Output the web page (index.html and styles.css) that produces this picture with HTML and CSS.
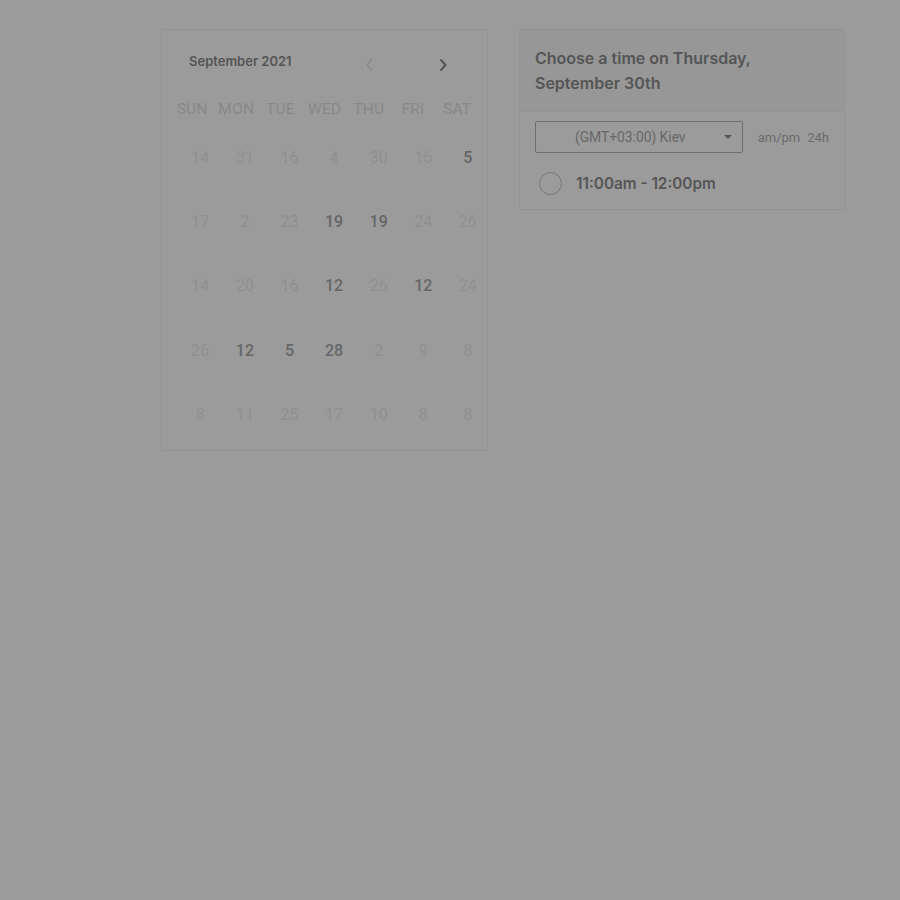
FILE: index.html
```html
<!DOCTYPE html>
<html>
<head>
<meta charset="utf-8">
<link rel="stylesheet" href="styles.css">
</head>
<body>
<div class="page">
  <div class="calendar">
    <div class="cal-head">
      <div class="month">September 2021</div>
      <div class="navs">
        <svg class="nav prev" width="12" height="16" viewBox="0 0 12 16"><path d="M8 2 L3 8 L8 14" fill="none" stroke="currentColor" stroke-width="1.6"/></svg>
        <svg class="nav next" width="12" height="16" viewBox="0 0 12 16"><path d="M3.5 2.5 L8.5 8 L3.5 13.5" fill="none" stroke="currentColor" stroke-width="2.2"/></svg>
      </div>
    </div>
    <div class="weekdays">
      <span>SUN</span><span>MON</span><span>TUE</span><span>WED</span><span>THU</span><span>FRI</span><span>SAT</span>
    </div>
    <div class="dates">
      <span>14</span><span>31</span><span>16</span><span>4</span><span>30</span><span>16</span><span class="on">5</span>
      <span>17</span><span>2</span><span>23</span><span class="on">19</span><span class="on">19</span><span>24</span><span>26</span>
      <span>14</span><span>20</span><span>16</span><span class="on">12</span><span>26</span><span class="on">12</span><span>24</span>
      <span>26</span><span class="on">12</span><span class="on">5</span><span class="on">28</span><span>2</span><span>9</span><span>8</span>
      <span>8</span><span>11</span><span>25</span><span>17</span><span>10</span><span>8</span><span>8</span>
    </div>
  </div>
  <div class="times">
    <div class="times-head">Choose a time on Thursday,<br>September 30th</div>
    <div class="times-body">
      <div class="tz-row">
        <div class="select">
          <span class="select-text">(GMT+03:00) Kiev</span>
          <svg class="caret" width="8" height="4" viewBox="0 0 8 4"><path d="M0 0 L8 0 L4 4 Z" fill="currentColor"/></svg>
        </div>
        <div class="fmt"><span>am/pm</span><span>24h</span></div>
      </div>
      <div class="slot">
        <span class="radio"></span>
        <span class="slot-text">11:00am - 12:00pm</span>
      </div>
    </div>
  </div>
</div>
</body>
</html>
```

FILE: styles.css
```css
html, body {
  margin: 0;
  padding: 0;
  background: #9b9b9b;
  height: 100%;
}
body {
  font-family: Roboto, "Liberation Sans", sans-serif;
}
.page {
  display: flex;
  align-items: flex-start;
  gap: 31px;
  padding: 29px 0 0 161px;
}
.calendar {
  width: 325px;
  height: 420px;
  border: 1px solid #929292;
  border-radius: 2px;
  box-sizing: content-box;
}
.cal-head {
  display: flex;
  align-items: center;
  height: 64px;
  padding: 0 0 0 27px;
}
.month {
  font-family: Inter, sans-serif;
  font-weight: 600;
  font-size: 13px;
  color: #555;
  margin-top: -3px;
  width: 175px;
}
.navs {
  display: flex;
  gap: 61px;
  align-items: center;
  margin-top: 6px;
}
.nav.prev { color: #8a8a8a; }
.nav.next { color: #555; }
.weekdays {
  display: grid;
  grid-template-columns: repeat(7, 44.2px);
  padding-left: 8px;
  height: 30px;
  align-items: center;
  font-size: 15.5px;
  color: #888;
  letter-spacing: 0.2px;
}
.weekdays span { text-align: center; }
.dates {
  display: grid;
  grid-template-columns: repeat(7, 44.6px);
  grid-auto-rows: 64.3px;
  padding-left: 16px;
  margin-top: 1px;
  font-size: 16px;
  color: #909090;
  align-items: center;
}
.dates span { text-align: center; }
.dates .on {
  color: #666;
  font-weight: 500;
}
.times {
  width: 324px;
  border: 1px solid #929292;
  border-radius: 2px;
}
.times-head {
  background: #979797;
  border-bottom: 1px solid #939393;
  padding: 16px 16px 14px 15px;
  font-family: Inter, sans-serif;
  font-weight: 600;
  font-size: 16px;
  line-height: 25px;
  color: #555;
  height: 51px;
}
.times-body {
  padding: 9px 15px 14px 15px;
}
.tz-row {
  display: flex;
  align-items: center;
}
.select {
  width: 206px;
  height: 30px;
  border: 1px solid #6e6e6e;
  border-radius: 2px;
  display: flex;
  align-items: center;
  box-sizing: content-box;
}
.select-text {
  font-size: 13.8px;
  color: #676767;
  padding-left: 39px;
  flex: 1;
}
.caret {
  color: #555;
  margin-right: 10px;
}
.fmt {
  display: flex;
  gap: 7px;
  margin-left: 15px;
  font-size: 13px;
  color: #6c6c6c;
}
.slot {
  display: flex;
  align-items: center;
  margin-top: 19px;
  padding-left: 4px;
}
.radio {
  width: 21px;
  height: 21px;
  border: 1.5px solid #777;
  border-radius: 50%;
}
.slot-text {
  margin-left: 14px;
  font-family: Inter, sans-serif;
  font-weight: 600;
  font-size: 15.3px;
  color: #555;
}
```
